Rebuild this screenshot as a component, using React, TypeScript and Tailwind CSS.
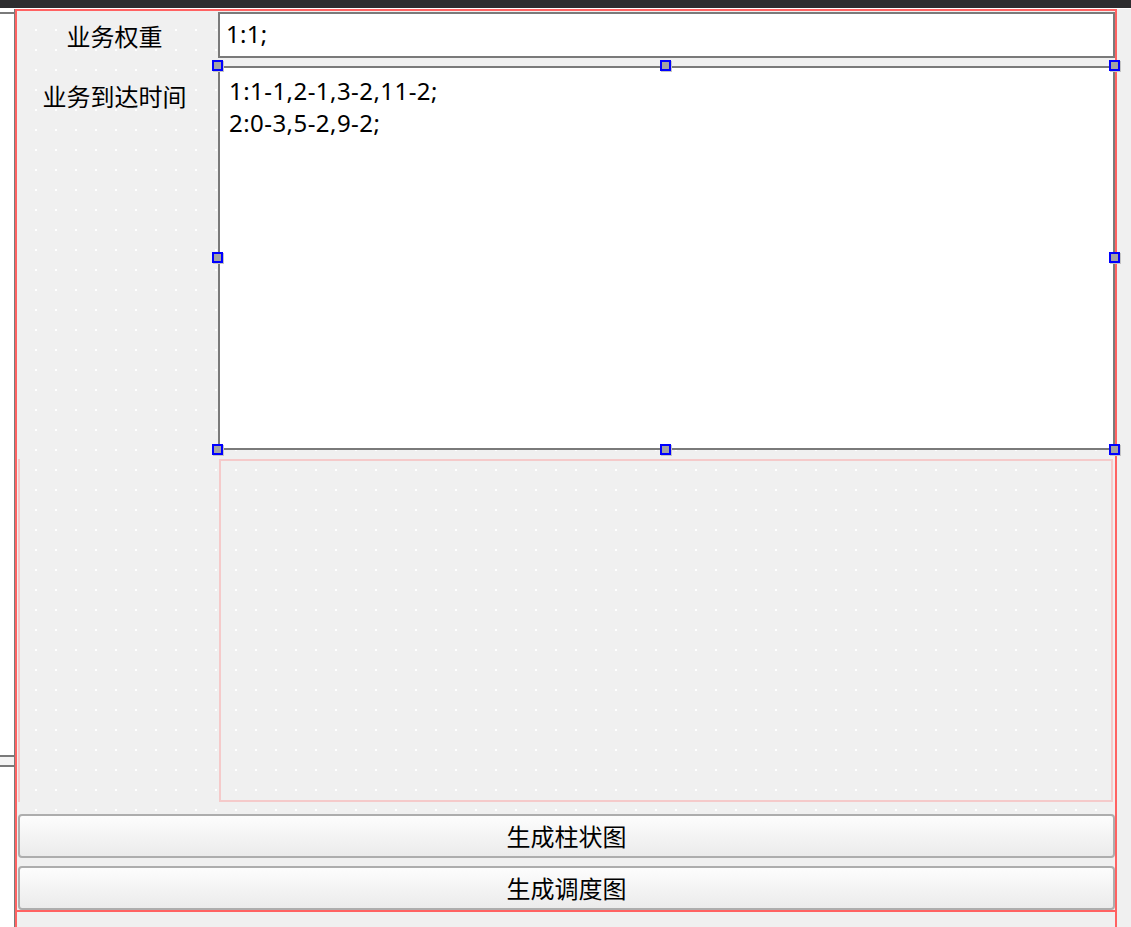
import React from "react";

const cjk = { fontFamily: '"Noto Sans CJK SC", "Noto Sans", sans-serif' };
const latin = { fontFamily: '"Noto Sans", "Open Sans", "Noto Sans CJK SC", sans-serif' };

function Handle({ className }: { className: string }) {
  return (
    <div
      className={`absolute w-[11px] h-[11px] border-2 border-[#0000ff] bg-[#a3a3a3] shadow-[1px_1px_0_#c4c4c4] ${className}`}
    />
  );
}

export default function App() {
  return (
    <div className="w-[1131px] h-[927px] overflow-hidden bg-[#f0f0f0] flex flex-col text-black">
      {/* top dark bar */}
      <div className="h-[8px] bg-[#2d2d2f] shrink-0" />
      <div className="h-[1px] bg-white shrink-0" />
      <div className="flex flex-1 min-h-0">
        {/* left strip (neighbour widget) */}
        <div className="w-[14px] bg-white flex flex-col shrink-0">
          <div className="mt-[3px] h-[2px] bg-[#7a7a7a]" />
          <div className="mt-[741px] h-[12px] border-y-2 border-[#7a7a7a] bg-[#f4f4f4]" />
        </div>
        <div className="w-[1px] bg-[#7a7a7a] shrink-0" />
        {/* form */}
        <div className="w-[1102px] border-t-2 border-x-2 border-[#ff6262] flex flex-col shrink-0">
          <div className="h-[899px] flex flex-col bg-[radial-gradient(circle,#ffffff_1.1px,transparent_1.4px)] bg-[length:20px_20px] bg-[position:9px_9px]">
            {/* row 1 */}
            <div className="mt-[1px] flex h-[46px]">
              <div className="w-[195px] flex items-center justify-center text-[24px] leading-[32px] pt-[2px]" style={cjk}>
                业务权重
              </div>
              <div className="ml-[6px] w-[897px] h-[46px] bg-white border-2 border-[#7a7a7a] flex items-center pl-[6px] pb-[2px] text-[24px] leading-[32px] tracking-[0.3px]" style={latin}>
                1:1;
              </div>
            </div>
            {/* row 2 */}
            <div className="mt-[8px] flex h-[384px]">
              <div className="w-[195px] flex justify-center text-[24px] leading-[32px] pt-[14px]" style={cjk}>
                业务到达时间
              </div>
              <div className="relative ml-[6px] w-[897px] h-[384px]">
                <div className="w-full h-full bg-white border-2 border-[#7a7a7a] pl-[9px] pt-[7px] text-[24px] leading-[31.5px] tracking-[0.45px]" style={latin}>
                  <div>1:1-1,2-1,3-2,11-2;</div>
                  <div>2:0-3,5-2,9-2;</div>
                </div>
                <Handle className="left-[-6px] top-[-6px]" />
                <Handle className="left-[442px] top-[-6px]" />
                <Handle className="right-[-5px] top-[-6px]" />
                <Handle className="left-[-6px] top-[186px]" />
                <Handle className="right-[-5px] top-[186px]" />
                <Handle className="left-[-6px] bottom-[-5px]" />
                <Handle className="left-[442px] bottom-[-5px]" />
                <Handle className="right-[-5px] bottom-[-5px]" />
              </div>
            </div>
            {/* row 3: spacer areas */}
            <div className="mt-[9px] flex h-[343px]">
              <div className="w-[195px] flex">
                <div className="ml-[1px] w-[2px] h-full bg-[#f5caca]" />
              </div>
              <div className="ml-[7px] w-[894px] h-full border-2 border-[#f5caca]" />
            </div>
            {/* buttons */}
            <button
              className="mt-[12px] ml-[1px] w-[1097px] h-[44px] shrink-0 rounded-[4px] border-2 border-[#adadad] bg-linear-to-b from-[#fdfdfd] to-[#ebebeb] text-[24px] leading-[32px] flex items-center justify-center"
              style={cjk}
            >
              生成柱状图
            </button>
            <button
              className="mt-[8px] ml-[1px] w-[1097px] h-[44px] shrink-0 rounded-[4px] border-2 border-[#adadad] bg-linear-to-b from-[#fdfdfd] to-[#ebebeb] text-[24px] leading-[32px] flex items-center justify-center"
              style={cjk}
            >
              生成调度图
            </button>
          </div>
          <div className="h-[2px] bg-[#ff6262] shrink-0" />
          <div className="flex-1" />
        </div>
        <div className="flex-1" />
      </div>
    </div>
  );
}
